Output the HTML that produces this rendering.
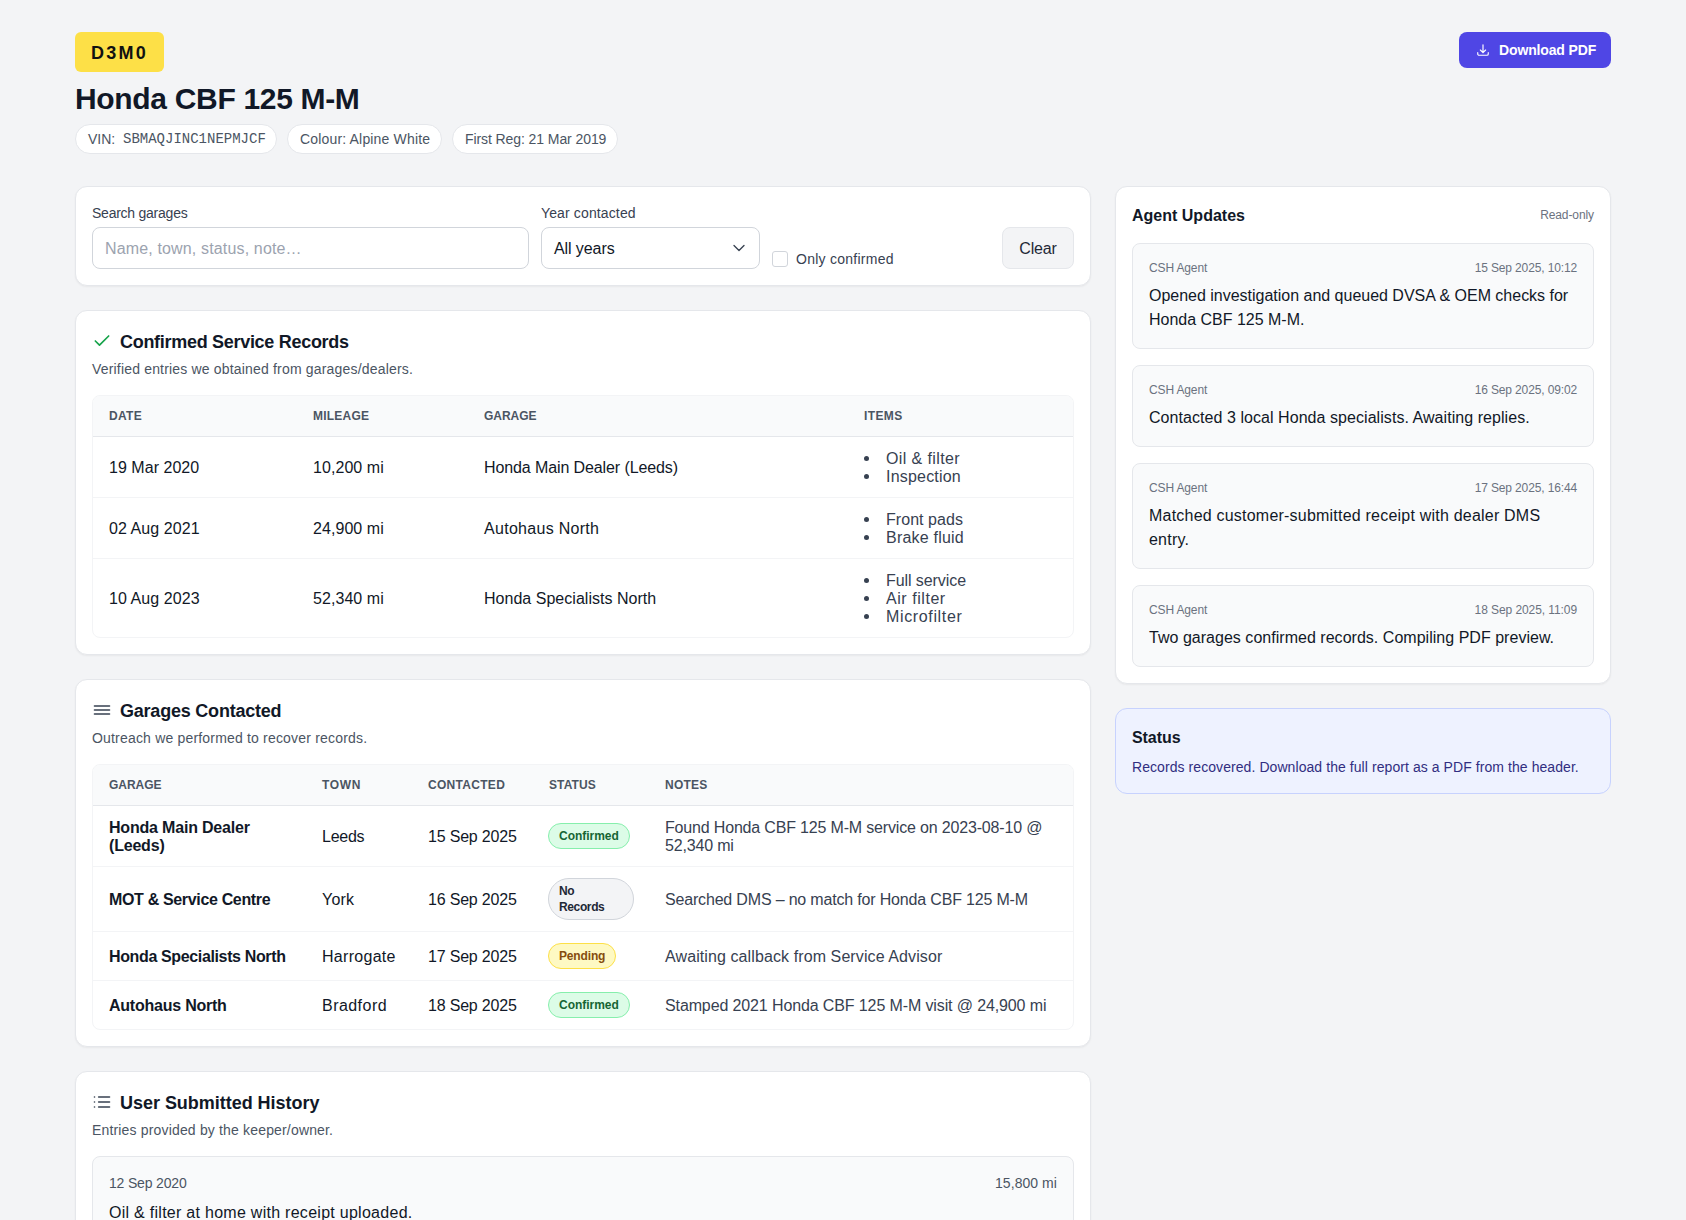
<!DOCTYPE html>
<html><head><meta charset="utf-8">
<style>
*{box-sizing:border-box;margin:0;padding:0}
html,body{width:1686px;height:1220px;overflow:hidden}
body{background:#f3f4f6;font-family:"Liberation Sans",sans-serif;color:#111827;position:relative}
.a{position:absolute}
.t{position:absolute;white-space:nowrap}
.card{position:absolute;background:#fff;border:1px solid #e5e7eb;border-radius:12px;box-shadow:0 1px 2px rgba(0,0,0,.05)}
.plate{left:75px;top:32px;width:89px;height:40px;border-radius:6px;background:#fde047;font-weight:700;font-size:18px;line-height:42px;letter-spacing:.1em;padding-left:16px;color:#111}
h1{position:absolute;left:75px;top:81px;font-size:30px;line-height:36px;font-weight:700;color:#111827;white-space:nowrap}
.chip{position:absolute;top:124px;height:30px;border:1px solid #e5e7eb;border-radius:999px;background:#fff;font-size:14px;line-height:28px;color:#4b5563;padding-left:12px;white-space:nowrap}
.mono{font-family:"Liberation Mono",monospace}
.btn{left:1459px;top:32px;width:152px;height:36px;border-radius:8px;background:#4f46e5;color:#fff}
.lbl{font-size:14px;line-height:20px;color:#374151}
.inp{position:absolute;top:227px;height:42px;border:1px solid #d1d5db;border-radius:8px;background:#fff;font-size:16px;line-height:42px;padding-left:12px;white-space:nowrap}
.h2{font-size:18px;line-height:28px;font-weight:700;color:#111827}
.sub{font-size:14px;line-height:20px;color:#4b5563}
.tbl{position:absolute;border:1px solid #f3f4f6;border-radius:8px;overflow:hidden;background:#fff}
.th{position:absolute;left:0;top:0;right:0;height:40px;background:#f9fafb}
.hd{position:absolute;top:0;font-size:12px;line-height:40px;font-weight:700;letter-spacing:.05em;color:#4b5563;white-space:nowrap}
.ln{position:absolute;left:0;right:0;height:1px;background:#f3f4f6}
.hl{background:#e5e7eb}
.c{position:absolute;font-size:16px;line-height:18px;white-space:nowrap;color:#111827}
.it{position:absolute;font-size:16px;line-height:18px;color:#374151;white-space:nowrap}
.bul{position:absolute;width:5px;height:5px;border-radius:50%;background:#374151}
.badge{position:absolute;border:1px solid;border-radius:999px;font-size:12px;line-height:16px;font-weight:700;padding:4px 10px;white-space:nowrap}
.ok{background:#dcfce7;border-color:#86efac;color:#166534}
.pend{background:#fef9c3;border-color:#fde047;color:#854d0e}
.none{background:#f3f4f6;border-color:#d1d5db;color:#1f2937}
.upd{position:absolute;left:16px;width:462px;background:#f9fafb;border:1px solid #e5e7eb;border-radius:8px}
.meta{position:absolute;top:16px;left:16px;right:16px;font-size:12px;line-height:16px;color:#6b7280}
.meta span{position:absolute;right:0;top:0}
.utx{position:absolute;top:40px;left:16px;font-size:16px;line-height:24px;color:#111827;white-space:nowrap}
</style></head><body>

<div class="a plate" style="letter-spacing: 2.244px;">D3M0</div>
<h1 style="letter-spacing: -0.322px;">Honda CBF 125 M-M</h1>
<div class="chip" style="left:75px;width:202px">VIN:<span class="mono t" style="left:47px;top:0">SBMAQJINC1NEPMJCF</span></div>
<div class="chip" style="left: 287px; width: 155px; letter-spacing: 0.168px;">Colour: Alpine White</div>
<div class="chip" style="left: 452px; width: 166px; letter-spacing: -0.086px;">First Reg: 21 Mar 2019</div>

<div class="a btn">
  <svg class="a" style="left:17px;top:11px" width="14" height="14" viewBox="0 0 24 24" fill="none" stroke="#fff" stroke-width="2" stroke-linecap="round" stroke-linejoin="round"><path d="M3 16.5v2.25A2.25 2.25 0 0 0 5.25 21h13.5A2.25 2.25 0 0 0 21 18.75V16.5M16.5 12 12 16.5m0 0L7.5 12m4.5 4.5V3"></path></svg>
  <div class="t" style="left: 40px; top: 0px; font-size: 14px; line-height: 36px; font-weight: 700; letter-spacing: -0.137px;">Download PDF</div>
</div>

<!-- filter card -->
<div class="card" style="left:75px;top:186px;width:1016px;height:100px">
  <div class="t lbl" style="left: 16px; top: 16px; letter-spacing: -0.244px;">Search garages</div>
  <div class="t lbl" style="left: 465px; top: 16px; letter-spacing: 0.131px;">Year contacted</div>
</div>
<div class="inp" style="left: 92px; width: 437px; color: rgb(156, 163, 175); letter-spacing: 0.15px;">Name, town, status, note…</div>
<div class="inp" style="left: 541px; width: 219px; color: rgb(17, 24, 39); letter-spacing: -0.088px;">All years
  <svg class="a" style="left:189px;top:12px" width="16" height="16" viewBox="0 0 24 24" fill="none" stroke="#374151" stroke-width="2" stroke-linecap="round" stroke-linejoin="round"><path d="m4.5 8.25 7.5 7.5 7.5-7.5"></path></svg>
</div>
<div class="a" style="left:772px;top:251px;width:16px;height:16px;border:1px solid #d1d5db;border-radius:3px;background:#fff"></div>
<div class="t lbl" style="left: 796px; top: 249px; letter-spacing: 0.257px;">Only confirmed</div>
<div class="a" style="left: 1002px; top: 227px; width: 72px; height: 42px; background: rgb(243, 244, 246); border: 1px solid rgb(229, 231, 235); border-radius: 8px; font-size: 16px; line-height: 42px; text-align: center; color: rgb(31, 41, 55); letter-spacing: -0.177px;">Clear</div>

<!-- confirmed card -->
<div class="card" style="left:75px;top:310px;width:1016px;height:345px"></div>
<svg class="a" style="left:92px;top:331px" width="20" height="20" viewBox="0 0 24 24" fill="none" stroke="#16a34a" stroke-width="2" stroke-linecap="round" stroke-linejoin="round"><path d="M20 6 9 17l-5-5"></path></svg>
<div class="t h2" style="left: 120px; top: 328px; letter-spacing: -0.295px;">Confirmed Service Records</div>
<div class="t sub" style="left: 92px; top: 359px; letter-spacing: 0.178px;">Verified entries we obtained from garages/dealers.</div>
<div class="tbl" style="left:92px;top:395px;width:982px;height:243px">
  <div class="th"></div>
  <div class="hd" style="left: 16px; letter-spacing: 0.298px;">DATE</div>
  <div class="hd" style="left: 220px; letter-spacing: 0.224px;">MILEAGE</div>
  <div class="hd" style="left: 391px; letter-spacing: -0.027px;">GARAGE</div>
  <div class="hd" style="left: 771px; letter-spacing: 0.402px;">ITEMS</div>
  <div class="ln hl" style="top:40px"></div>
  <div class="ln" style="top:101px"></div>
  <div class="ln" style="top:162px"></div>
</div>
<!-- rows (absolute page coords) -->
<div class="c" style="left: 109px; top: 459px; letter-spacing: 0.033px;">19 Mar 2020</div>
<div class="c" style="left: 313px; top: 459px; letter-spacing: 0.064px;">10,200 mi</div>
<div class="c" style="left: 484px; top: 459px; letter-spacing: -0.105px;">Honda Main Dealer (Leeds)</div>
<div class="bul" style="left:864px;top:456px"></div><div class="it" style="left: 886px; top: 450px; letter-spacing: 0.394px;">Oil &amp; filter</div>
<div class="bul" style="left:864px;top:474px"></div><div class="it" style="left: 886px; top: 468px; letter-spacing: 0.199px;">Inspection</div>

<div class="c" style="left: 109px; top: 520px; letter-spacing: 0.08px;">02 Aug 2021</div>
<div class="c" style="left: 313px; top: 520px; letter-spacing: 0.064px;">24,900 mi</div>
<div class="c" style="left: 484px; top: 520px; letter-spacing: 0.288px;">Autohaus North</div>
<div class="bul" style="left:864px;top:517px"></div><div class="it" style="left: 886px; top: 511px; letter-spacing: 0.051px;">Front pads</div>
<div class="bul" style="left:864px;top:535px"></div><div class="it" style="left: 886px; top: 529px; letter-spacing: 0.208px;">Brake fluid</div>

<div class="c" style="left: 109px; top: 590px; letter-spacing: 0.08px;">10 Aug 2023</div>
<div class="c" style="left: 313px; top: 590px; letter-spacing: 0.064px;">52,340 mi</div>
<div class="c" style="left: 484px; top: 590px; letter-spacing: 0.026px;">Honda Specialists North</div>
<div class="bul" style="left:864px;top:578px"></div><div class="it" style="left: 886px; top: 572px; letter-spacing: -0.079px;">Full service</div>
<div class="bul" style="left:864px;top:596px"></div><div class="it" style="left: 886px; top: 590px; letter-spacing: 0.548px;">Air filter</div>
<div class="bul" style="left:864px;top:614px"></div><div class="it" style="left: 886px; top: 608px; letter-spacing: 0.644px;">Microfilter</div>

<!-- garages card -->
<div class="card" style="left:75px;top:679px;width:1016px;height:368px"></div>
<svg class="a" style="left:92px;top:700px" width="20" height="20" viewBox="0 0 24 24" fill="none" stroke="#374151" stroke-width="2" stroke-linecap="round" stroke-linejoin="round"><path d="M3 7.2h18M3 12h18M3 16.8h18"></path></svg>
<div class="t h2" style="left: 120px; top: 697px; letter-spacing: -0.216px;">Garages Contacted</div>
<div class="t sub" style="left: 92px; top: 728px; letter-spacing: 0.184px;">Outreach we performed to recover records.</div>
<div class="tbl" style="left:92px;top:764px;width:982px;height:266px">
  <div class="th"></div>
  <div class="hd" style="left: 16px; letter-spacing: -0.027px;">GARAGE</div>
  <div class="hd" style="left: 229px; letter-spacing: 0.686px;">TOWN</div>
  <div class="hd" style="left: 335px; letter-spacing: 0.3px;">CONTACTED</div>
  <div class="hd" style="left: 456px; letter-spacing: 0.092px;">STATUS</div>
  <div class="hd" style="left: 572px; letter-spacing: 0.241px;">NOTES</div>
  <div class="ln hl" style="top:40px"></div>
  <div class="ln" style="top:101px"></div>
  <div class="ln" style="top:166px"></div>
  <div class="ln" style="top:215px"></div>
</div>
<div class="c" style="left: 109px; top: 819px; font-weight: 700; letter-spacing: -0.195px;">Honda Main Dealer<br>(Leeds)</div>
<div class="c" style="left: 322px; top: 828px; letter-spacing: -0.243px;">Leeds</div>
<div class="c" style="left: 428px; top: 828px; letter-spacing: -0.196px;">15 Sep 2025</div>
<div class="badge ok" style="left: 548px; top: 823px; letter-spacing: -0.025px;">Confirmed</div>
<div class="c" style="left: 665px; top: 819px; color: rgb(55, 65, 81); letter-spacing: -0.172px;">Found Honda CBF 125 M-M service on 2023-08-10 @<br>52,340 mi</div>

<div class="c" style="left: 109px; top: 891px; font-weight: 700; letter-spacing: -0.338px;">MOT &amp; Service Centre</div>
<div class="c" style="left: 322px; top: 891px; letter-spacing: 0.208px;">York</div>
<div class="c" style="left: 428px; top: 891px; letter-spacing: -0.196px;">16 Sep 2025</div>
<div class="badge none" style="left: 548px; top: 878px; width: 86px; white-space: normal; letter-spacing: -0.377px;">No<br>Records</div>
<div class="c" style="left: 665px; top: 891px; color: rgb(55, 65, 81); letter-spacing: -0.176px;">Searched DMS – no match for Honda CBF 125 M-M</div>

<div class="c" style="left: 109px; top: 948px; font-weight: 700; letter-spacing: -0.363px;">Honda Specialists North</div>
<div class="c" style="left: 322px; top: 948px; letter-spacing: 0.295px;">Harrogate</div>
<div class="c" style="left: 428px; top: 948px; letter-spacing: -0.196px;">17 Sep 2025</div>
<div class="badge pend" style="left: 548px; top: 943px; letter-spacing: -0.159px;">Pending</div>
<div class="c" style="left: 665px; top: 948px; color: rgb(55, 65, 81); letter-spacing: 0.099px;">Awaiting callback from Service Advisor</div>

<div class="c" style="left: 109px; top: 997px; font-weight: 700; letter-spacing: -0.23px;">Autohaus North</div>
<div class="c" style="left: 322px; top: 997px; letter-spacing: 0.457px;">Bradford</div>
<div class="c" style="left: 428px; top: 997px; letter-spacing: -0.196px;">18 Sep 2025</div>
<div class="badge ok" style="left: 548px; top: 992px; letter-spacing: -0.025px;">Confirmed</div>
<div class="c" style="left: 665px; top: 997px; color: rgb(55, 65, 81); letter-spacing: -0.119px;">Stamped 2021 Honda CBF 125 M-M visit @ 24,900 mi</div>

<!-- user submitted -->
<div class="card" style="left:75px;top:1071px;width:1016px;height:260px"></div>
<svg class="a" style="left:92px;top:1092px" width="20" height="20" viewBox="0 0 24 24" fill="none" stroke="#374151" stroke-width="2" stroke-linecap="round" stroke-linejoin="round"><path d="M3 12h.01M3 18h.01M3 6h.01M8 12h13M8 18h13M8 6h13"></path></svg>
<div class="t h2" style="left: 120px; top: 1089px; letter-spacing: -0.03px;">User Submitted History</div>
<div class="t sub" style="left: 92px; top: 1120px; letter-spacing: 0.166px;">Entries provided by the keeper/owner.</div>
<div class="a" style="left:92px;top:1156px;width:982px;height:120px;background:#f9fafb;border:1px solid #e5e7eb;border-radius:8px"></div>
<div class="t sub" style="left: 109px; top: 1173px; letter-spacing: -0.172px;">12 Sep 2020</div>
<div class="t sub" style="right: 629px; top: 1173px; letter-spacing: 0.057px;">15,800 mi</div>
<div class="t" style="left: 109px; top: 1201px; font-size: 16px; line-height: 24px; letter-spacing: 0.275px;">Oil &amp; filter at home with receipt uploaded.</div>

<!-- agent updates -->
<div class="card" style="left:1115px;top:186px;width:496px;height:498px">
  <div class="t" style="left: 16px; top: 17px; font-size: 16px; line-height: 24px; font-weight: 700; letter-spacing: 0.005px;">Agent Updates</div>
  <div class="t" style="right: 16px; top: 20px; font-size: 12px; line-height: 16px; color: rgb(107, 114, 128); letter-spacing: -0.093px;">Read-only</div>
  <div class="upd" style="top:56px;height:106px"><div class="meta" style="letter-spacing: -0.139px;">CSH Agent<span style="letter-spacing: -0.133px;">15 Sep 2025, 10:12</span></div><div class="utx" style="letter-spacing: -0.012px;">Opened investigation and queued DVSA &amp; OEM checks for<br>Honda CBF 125 M-M.</div></div>
  <div class="upd" style="top:178px;height:82px"><div class="meta" style="letter-spacing: -0.139px;">CSH Agent<span style="letter-spacing: -0.133px;">16 Sep 2025, 09:02</span></div><div class="utx" style="letter-spacing: 0.056px;">Contacted 3 local Honda specialists. Awaiting replies.</div></div>
  <div class="upd" style="top:276px;height:106px"><div class="meta" style="letter-spacing: -0.139px;">CSH Agent<span style="letter-spacing: -0.133px;">17 Sep 2025, 16:44</span></div><div class="utx" style="letter-spacing: 0.214px;">Matched customer-submitted receipt with dealer DMS<br>entry.</div></div>
  <div class="upd" style="top:398px;height:82px"><div class="meta" style="letter-spacing: -0.139px;">CSH Agent<span style="letter-spacing: -0.083px;">18 Sep 2025, 11:09</span></div><div class="utx" style="letter-spacing: 0.026px;">Two garages confirmed records. Compiling PDF preview.</div></div>
</div>

<!-- status -->
<div class="a" style="left:1115px;top:708px;width:496px;height:86px;background:#eef2ff;border:1px solid #c7d2fe;border-radius:12px">
  <div class="t" style="left: 16px; top: 17px; font-size: 16px; line-height: 24px; font-weight: 700; letter-spacing: -0.064px;">Status</div>
  <div class="t" style="left: 16px; top: 48px; font-size: 14px; line-height: 20px; color: rgb(49, 46, 129); letter-spacing: 0.07px;">Records recovered. Download the full report as a PDF from the header.</div>
</div>


</body></html>
